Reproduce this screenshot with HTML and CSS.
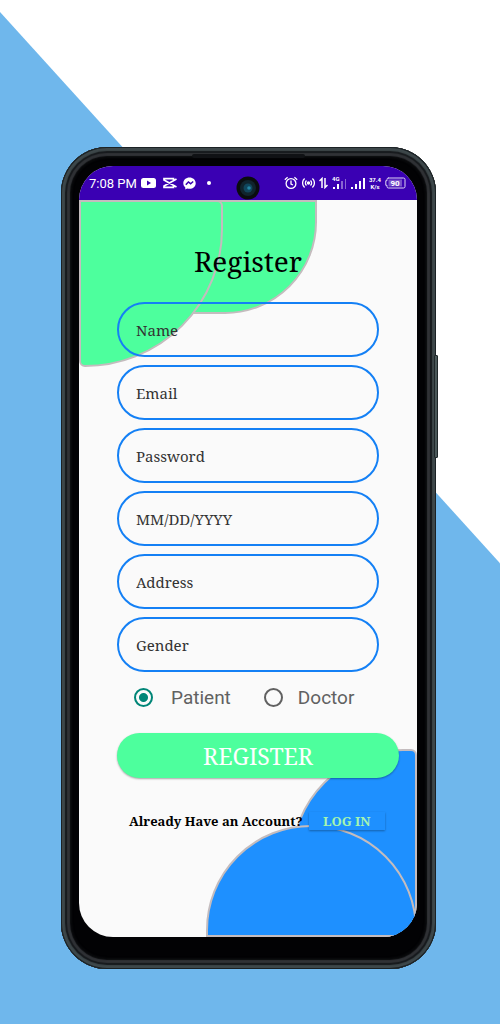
FILE: index.html
```html
<!DOCTYPE html>
<html lang="en">
<head>
<meta charset="utf-8">
<meta name="viewport" content="width=device-width, initial-scale=1">
<title>Register</title>
<link rel="stylesheet" href="styles.css">
</head>
<body>
<div class="stage">
  <div class="phone">
    <span class="speaker"></span>
    <span class="power-key"></span>
    <div class="screen">
      <header class="status">
        <span class="time">7:08 PM</span>
        <svg class="icon" width="15" height="12" viewBox="0 0 15 12"><rect y="1" width="15" height="10" rx="2.5" fill="#fff"/><path d="M6 3.5v5L10 6z" fill="#3a00b3"/></svg>
        <svg class="icon" width="15" height="12" viewBox="0 0 15 12" fill="none" stroke="#fff" stroke-width="1.7"><path d="M14.500 2L2 9V10.300H11.500V8.500M14.500 10L2 3V1.700H11.500V3.500"/></svg>
        <svg class="icon" width="13" height="13" viewBox="0 0 13 13"><path d="M6.500.5C3 .5.300 2.900.300 6.200c0 1.800.8 3.200 2 4.200v2l1.900-.9c.7.2 1.500.3 2.300.3 3.500 0 6.200-2.300 6.200-5.600S10 .5 6.500.5z" fill="#fff"/><path d="M2.800 7.800L5.400 5l2.200 1.700L10.200 4.500" fill="none" stroke="#3a00b3" stroke-width="1.500"/></svg>
        <span class="dot"></span>
        <span class="system">
          <svg width="14" height="14" viewBox="0 0 14 14" fill="none" stroke="#fff" stroke-width="1.300"><circle cx="7" cy="7.500" r="4.900"/><path d="M7 4.500V8l2 1M.8 3.700L3.600 1.300M13.200 3.700L10.400 1.300"/></svg>
          <svg width="13" height="12" viewBox="0 0 13 12" fill="none" stroke="#fff" stroke-width="1.300"><circle cx="6.500" cy="6" r="1" fill="#fff"/><path d="M4.500 3.500a3.400 3.400 0 0 0 0 5M8.500 3.500a3.400 3.400 0 0 1 0 5M2.600 1.500a6 6 0 0 0 0 9M10.400 1.500a6 6 0 0 1 0 9"/></svg>
          <svg width="9" height="12" viewBox="0 0 9 12" fill="none" stroke="#fff" stroke-width="1.500"><path d="M.5 4L3 1.500V11M6 1v9.500L8.500 8"/></svg>
          <svg width="15" height="16" viewBox="0 0 15 16" fill="#fff"><text class="tiny" x="0" y="6">4G</text><path d="M1 12h2v2H1zM5 9h2v5H5z"/><path d="M9 6h2v8H9zM13 4h1v10h-1z" opacity=".4"/></svg>
          <svg width="14" height="12" viewBox="0 0 14 12" fill="#fff"><path d="M0 10h2v2H0zM4 7h2v5H4zM8 4h2v8H8zM12 1h2v11h-2z"/></svg>
          <span class="speed">37.4<br>K/s</span>
          <svg width="21" height="12" viewBox="0 0 21 12"><path d="M3 1h15.500q1.500 0 1.500 1.500v7q0 1.500-1.500 1.500H3.500Q2 11 2 9.500V8.300H.8V3.700H2V2.500Q2 1 3.500 1z" fill="none" stroke="#ddd5f3"/><path d="M3.500 2.500H17v7H3.500z" fill="#7a52cc"/><text class="charge" x="10" y="9" text-anchor="middle" fill="#fff">90</text></svg>
        </span>
        <svg class="camera" width="24" height="24" viewBox="0 0 24 24"><circle cx="12" cy="12" r="11.500" fill="#0a0c0f"/><circle cx="12" cy="12" r="8" fill="#10242d"/><circle cx="12" cy="12" r="4.500" fill="#10465c"/><circle cx="13" cy="12" r="1.800" fill="#2586a4"/></svg>
      </header>
      <main class="content">
        <span class="blob green-back"></span>
        <span class="blob green-front"></span>
        <span class="blob blue-back"></span>
        <span class="blob blue-front"></span>
        <form class="form">
          <h1 class="title">Register</h1>
          <div class="fields">
            <input class="field" type="text" aria-label="Name" placeholder="Name">
            <input class="field" type="email" aria-label="Email" placeholder="Email">
            <input class="field" type="password" aria-label="Password" placeholder="Password">
            <input class="field" type="text" aria-label="Date of birth" placeholder="MM/DD/YYYY">
            <input class="field" type="text" aria-label="Address" placeholder="Address">
            <input class="field" type="text" aria-label="Gender" placeholder="Gender">
          </div>
          <div class="roles">
            <label class="role"><input class="radio" type="radio" name="role" checked>Patient</label>
            <label class="role doctor"><input class="radio" type="radio" name="role">Doctor</label>
          </div>
          <button class="submit" type="submit">REGISTER</button>
          <div class="account">
            <span>Already Have an Account?</span>
            <button class="login" type="button">LOG IN</button>
          </div>
        </form>
      </main>
    </div>
  </div>
</div>
</body>
</html>
```

FILE: styles.css
```css
* { box-sizing: border-box; }

body {
  margin: 0;
  background: #fff;
  font-family: "Noto Serif", "Liberation Serif", serif;
}

.stage {
  position: relative;
  min-height: 100vh;
  padding: 147px 64px 55px 61px;
}

.stage::before {
  content: "";
  position: absolute;
  inset: 0;
  background: #6fb7ec;
  clip-path: polygon(0 12px, 100% 55%, 100% 100%, 0 100%);
}

.phone {
  position: relative;
  padding: 19px 19px 32px 18px;
  border-radius: 46px;
  background: #020204;
  box-shadow:
    inset 0 0 0 1px #1b2225,
    inset 0 0 1px 4px #3d474a,
    inset 0 0 1px 6px #16191c,
    inset 0 0 1px 9px #303236,
    inset 0 0 2px 11px #0a0b0d;
}

.speaker {
  position: absolute;
  top: 7px;
  left: 35%;
  right: 35%;
  height: 4px;
  border-radius: 2px;
  background: #101215;
}

.power-key {
  position: absolute;
  top: 208px;
  right: -2px;
  width: 4px;
  height: 103px;
  border: 1px solid #20282a;
  border-radius: 1px;
  background: #4b5859;
}

.screen {
  position: relative;
  overflow: hidden;
  border-radius: 34px;
  background: #fafafa;
}

.status {
  position: relative;
  display: flex;
  align-items: center;
  height: 34px;
  padding: 0 11px 0 10px;
  background: #3a00b3;
  color: #fff;
  font-family: Roboto, sans-serif;
}

.time { font-size: 13px; white-space: nowrap; margin-right: 4px; }
.icon { flex: none; margin-right: 6px; }

.dot {
  width: 4px;
  height: 4px;
  margin-left: 5px;
  border-radius: 50%;
  background: #fff;
}

.system {
  display: flex;
  align-items: center;
  gap: 4px;
  margin-left: auto;
}

.system svg { flex: none; }
.tiny { font: bold 6px Roboto, sans-serif; }
.charge { font: bold 8px Roboto, sans-serif; }
.speed { font-size: 6px; font-weight: bold; line-height: 7px; text-align: center; }

.camera {
  position: absolute;
  top: 10px;
  left: 50%;
  margin-left: -12px;
}

.content {
  position: relative;
  padding: 41px 38px 106px;
}

.blob {
  position: absolute;
  border: 2px solid #c4bcbe;
}

.green-back {
  top: 0;
  left: 80px;
  width: 158px;
  height: 114px;
  border-radius: 0 0 92px 0;
  background: #4dff9d;
}

.green-front {
  top: 0;
  left: 0;
  width: 144px;
  height: 167px;
  border-radius: 0 6px 138px 6px;
  background: #4dff9d;
}

.blue-back {
  right: 0;
  bottom: 0;
  width: 126px;
  height: 188px;
  border-radius: 112px 6px 0 0;
  background: #1e90ff;
}

.blue-front {
  right: 0;
  bottom: 0;
  width: 211px;
  height: 112px;
  border-radius: 105px 105px 0 0;
  background: #1e90ff;
}

.form { position: relative; }

.title {
  margin: 0 0 21px;
  color: #000;
  font-size: 28px;
  font-weight: normal;
  line-height: 40px;
  text-align: center;
}

.fields {
  display: flex;
  flex-direction: column;
  gap: 8px;
}

.field {
  width: 100%;
  height: 55px;
  padding: 0 17px;
  border: 2px solid #1480f5;
  border-radius: 28px;
  background: transparent;
  color: #333;
  font-family: inherit;
  font-size: 15px;
}

.field::placeholder { color: #333; opacity: 1; }

.roles {
  display: flex;
  align-items: center;
  gap: 33px;
  height: 51px;
  padding-left: 17px;
  color: #616161;
  font-family: Roboto, sans-serif;
  font-size: 19px;
}

.role { display: flex; align-items: center; gap: 18px; }
.doctor { gap: 15px; }

.radio {
  appearance: none;
  width: 19px;
  height: 19px;
  margin: 0;
  border: 2px solid #616161;
  border-radius: 50%;
}

.radio:checked {
  border-color: #008577;
  background: radial-gradient(circle, #008577 4px, transparent 5px);
}

.submit {
  display: block;
  width: calc(100% + 20px);
  height: 45px;
  margin-top: 10px;
  border: 0;
  border-radius: 23px;
  background: #4dff9d;
  box-shadow: 0 1px 2px #0005;
  color: #fff;
  font-family: inherit;
  font-size: 23px;
}

.account {
  display: flex;
  align-items: center;
  gap: 6px;
  margin-top: 33px;
  padding-left: 12px;
  color: #000;
  font-size: 13px;
  font-weight: bold;
  line-height: 20px;
  white-space: nowrap;
}

.login {
  flex: none;
  width: 76px;
  height: 18px;
  padding: 0;
  border: 0;
  background: #1e90ff;
  box-shadow: 0 1px 2px #0005;
  color: #a5f5b0;
  font-family: inherit;
  font-size: 13px;
  font-weight: bold;
  line-height: 18px;
}
```
